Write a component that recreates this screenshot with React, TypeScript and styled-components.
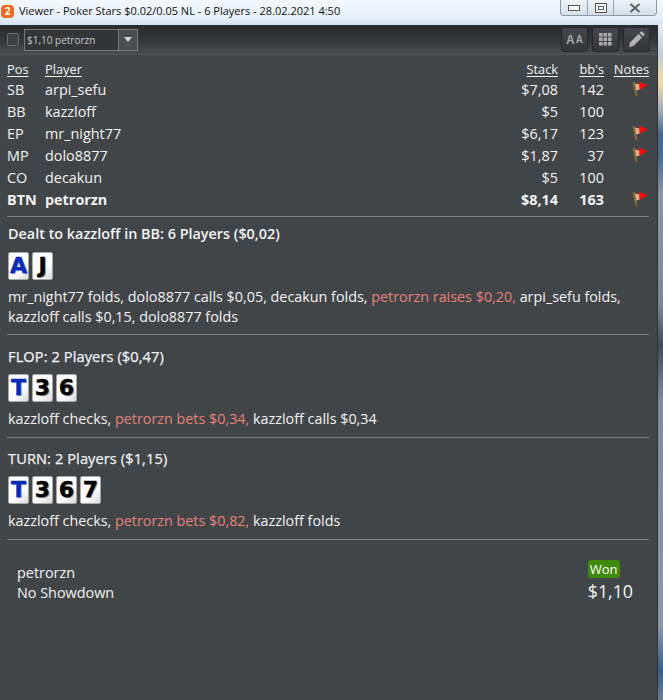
import React from 'react'
import styled, { createGlobalStyle } from 'styled-components'

const GlobalStyle = createGlobalStyle`
  html, body {
    margin: 0;
    padding: 0;
    background: #424548;
  }
  body {
    font-family: 'Open Sans', 'Noto Sans', sans-serif;
    overflow: hidden;
  }
`

interface Seat {
  pos: string
  name: string
  stack: string
  bbs: string
  flag?: boolean
  hero?: boolean
}

const seats: Seat[] = [
  { pos: 'SB', name: 'arpi_sefu', stack: '$7,08', bbs: '142', flag: true },
  { pos: 'BB', name: 'kazzloff', stack: '$5', bbs: '100' },
  { pos: 'EP', name: 'mr_night77', stack: '$6,17', bbs: '123', flag: true },
  { pos: 'MP', name: 'dolo8877', stack: '$1,87', bbs: '37', flag: true },
  { pos: 'CO', name: 'decakun', stack: '$5', bbs: '100' },
  { pos: 'BTN', name: 'petrorzn', stack: '$8,14', bbs: '163', flag: true, hero: true },
]

const Flag = () => (
  <svg width="16" height="16" viewBox="0 0 16 16">
    <path d="M1.5 1 L4.5 15" stroke="#8a6a34" strokeWidth="2" fill="none" />
    <path d="M3 2.5 L8 3.5 L8 8.5 L4 9.5 Z" fill="#d4b48c" />
    <path d="M7 1 L16 4 L7.5 9 Z" fill="#f40c0c" />
  </svg>
)

const App: React.FC = () => {
  return (
    <Window>
      <GlobalStyle />
      <TitleBar>
        <AppBadge>2</AppBadge>
        <TitleText>Viewer - Poker Stars $0.02/0.05 NL - 6 Players - 28.02.2021 4:50</TitleText>
        <WindowButtons>
          <WindowButton $w={26}>
            <svg width="12" height="6" viewBox="0 0 12 6"><rect x="0.5" y="0.5" width="11" height="5" fill="#fff" stroke="#555" /></svg>
          </WindowButton>
          <WindowButton $w={25}>
            <svg width="12" height="10" viewBox="0 0 12 10"><rect x="0.5" y="0.5" width="11" height="9" fill="#fff" stroke="#555" /><rect x="3.5" y="3.5" width="5" height="3" fill="none" stroke="#555" /></svg>
          </WindowButton>
          <WindowButton $w={42}>
            <svg width="12" height="10" viewBox="0 0 12 10"><path d="M1.5 1 L10.5 9 M10.5 1 L1.5 9" stroke="#666" strokeWidth="2.2" /></svg>
          </WindowButton>
        </WindowButtons>
      </TitleBar>
      <Main>
        <Pane>
          <Toolbar>
            <CheckBox />
            <Select>
              <SelectValue>$1,10 petrorzn</SelectValue>
              <SelectArrow><ArrowShape /></SelectArrow>
            </Select>
            <ToolButtons>
              <ToolButton>
                <FontGlyph>A</FontGlyph><FontGlyph $small>A</FontGlyph>
              </ToolButton>
              <ToolButton>
                <svg width="13" height="13" viewBox="0 0 13 13" fill="#a8a8a8">
                  {[0, 4.5, 9].map((y) => [0, 4.5, 9].map((x) => <rect key={`${x}-${y}`} x={x} y={y} width="3.6" height="3.6" />))}
                </svg>
              </ToolButton>
              <ToolButton>
                <svg width="17" height="17" viewBox="0 0 17 17" fill="#b4b4b4">
                  <path d="M1 16 L2 11.5 L10.5 3 L14 6.5 L5.5 15 Z" />
                  <path d="M11.5 2 L13 0.6 Q13.6 0.2 14.2 0.6 L16.4 2.8 Q16.8 3.4 16.4 4 L15 5.5 Z" />
                </svg>
              </ToolButton>
            </ToolButtons>
          </Toolbar>
          <Content>
            <SeatGrid>
              <HeadCell>Pos</HeadCell>
              <HeadCell>Player</HeadCell>
              <HeadCell $right>Stack</HeadCell>
              <HeadCell $right>bb's</HeadCell>
              <HeadCell $right>Notes</HeadCell>
              {seats.map((s) => (
                <React.Fragment key={s.pos}>
                  <SeatCell $hero={s.hero}>{s.pos}</SeatCell>
                  <SeatCell $hero={s.hero}>{s.name}</SeatCell>
                  <SeatCell $hero={s.hero} $right>{s.stack}</SeatCell>
                  <SeatCell $hero={s.hero} $right>{s.bbs}</SeatCell>
                  <NoteCell>{s.flag && <Flag />}</NoteCell>
                </React.Fragment>
              ))}
            </SeatGrid>

            <Street $top={7} $bottom={7}>
              <StreetTitle $bold>Dealt to kazzloff in BB: 6 Players ($0,02)</StreetTitle>
              <Cards>
                <Card $blue>A</Card>
                <Card>J</Card>
              </Cards>
              <Actions>
                mr_night77 folds, dolo8877 calls $0,05, decakun folds, <Raise>petrorzn raises $0,20,</Raise> arpi_sefu folds,
                <br />
                kazzloff calls $0,15, dolo8877 folds
              </Actions>
            </Street>

            <Street $top={11} $bottom={8}>
              <StreetTitle>FLOP: 2 Players ($0,47)</StreetTitle>
              <Cards>
                <Card $blue>T</Card>
                <Card>3</Card>
                <Card>6</Card>
              </Cards>
              <Actions>
                kazzloff checks, <Raise>petrorzn bets $0,34,</Raise> kazzloff calls $0,34
              </Actions>
            </Street>

            <Street $top={10} $bottom={8}>
              <StreetTitle>TURN: 2 Players ($1,15)</StreetTitle>
              <Cards>
                <Card $blue>T</Card>
                <Card>3</Card>
                <Card>6</Card>
                <Card>7</Card>
              </Cards>
              <Actions>
                kazzloff checks, <Raise>petrorzn bets $0,82,</Raise> kazzloff folds
              </Actions>
            </Street>

            <Result>
              <ResultNames>
                <div>petrorzn</div>
                <div>No Showdown</div>
              </ResultNames>
              <ResultAmount>
                <WonBadge>Won</WonBadge>
                <Amount>$1,10</Amount>
              </ResultAmount>
            </Result>
          </Content>
        </Pane>
        <Edge />
      </Main>
    </Window>
  )
}

const Window = styled.div`
  width: 663px;
  height: 700px;
  display: flex;
  flex-direction: column;
  overflow: hidden;
  background: #424548;
`

const TitleBar = styled.div`
  height: 25px;
  flex: none;
  box-sizing: border-box;
  display: flex;
  align-items: flex-start;
  padding-left: 1px;
  background: linear-gradient(#f3f9fd 0%, #e6f0f9 70%, #d3e0ee 100%);
`

const AppBadge = styled.div`
  width: 13px;
  height: 13px;
  margin-top: 5px;
  border-radius: 4px;
  background: #ee6a22;
  color: #fff;
  font-size: 10px;
  font-weight: 700;
  line-height: 13px;
  text-align: center;
`

const TitleText = styled.div`
  margin-left: 5px;
  margin-top: 3px;
  font-size: 11px;
  line-height: 16px;
  color: #111;
  white-space: nowrap;
`

const WindowButtons = styled.div`
  margin-left: auto;
  margin-right: 6px;
  display: flex;
  height: 15px;
  border: 1px solid #8a97a6;
  border-top: none;
  border-radius: 0 0 4px 4px;
  background: linear-gradient(#eef3f8, #d5dfe9);
`

const WindowButton = styled.div<{ $w: number }>`
  width: ${(p) => p.$w}px;
  display: flex;
  align-items: center;
  justify-content: center;
  border-left: 1px solid #9aa6b4;
  &:first-child {
    border-left: none;
  }
`

const Main = styled.div`
  flex: 1;
  display: flex;
  min-height: 0;
`

const Pane = styled.div`
  width: 657px;
  flex: none;
`

const Edge = styled.div`
  flex: 1;
  background: linear-gradient(
    #e4ecf4 0px,
    #c3ccd6 30px,
    #e8d8b0 50px,
    #e8d8b0 60px,
    #a4acb4 85px,
    #46668e 110px,
    #4a6a92 130px,
    #8a96a4 170px,
    #7a8794 280px,
    #3f4a57 320px,
    #7c8a9a 375px,
    #8a98a8 600px,
    #3b5c8c 645px,
    #6a7c92 675px
  );
  border-left: 1px solid #2c2e30;
`

const Toolbar = styled.div`
  height: 30px;
  box-sizing: border-box;
  display: flex;
  align-items: center;
  padding: 0 7px;
  background: linear-gradient(#2a2b2d 0%, #343537 50%, #4b4c4e 100%);
  border-bottom: 1px solid #55585b;
`

const CheckBox = styled.div`
  width: 10px;
  height: 11px;
  border: 1px solid #6a6c6e;
  border-radius: 2px;
  background: #3e4042;
`

const Select = styled.div`
  margin-left: 5px;
  width: 114px;
  height: 22px;
  box-sizing: border-box;
  display: flex;
  border: 1px solid #77797b;
  background: #333537;
`

const SelectValue = styled.div`
  flex: 1;
  padding-left: 2px;
  font-size: 10px;
  line-height: 20px;
  color: #c6c8ca;
`

const SelectArrow = styled.div`
  width: 18px;
  display: flex;
  align-items: center;
  justify-content: center;
  border-left: 1px solid #77797b;
  background: #4c4e50;
`

const ArrowShape = styled.div`
  border-left: 4.5px solid transparent;
  border-right: 4.5px solid transparent;
  border-top: 5px solid #d4d4d4;
`

const ToolButtons = styled.div`
  margin-left: auto;
  display: flex;
  gap: 4px;
`

const ToolButton = styled.div`
  width: 27px;
  height: 25px;
  box-sizing: border-box;
  display: flex;
  align-items: center;
  justify-content: center;
  gap: 1px;
  border: 1px solid #26272a;
  border-radius: 3px;
  background: linear-gradient(#45474a, #343638);
`

const FontGlyph = styled.span<{ $small?: boolean }>`
  font-family: 'Liberation Sans', sans-serif;
  font-weight: 700;
  font-size: ${(p) => (p.$small ? 10 : 12)}px;
  color: #a8a8a8;
`

const Content = styled.div`
  padding: 6px 0 0 7px;
  color: #f1f2f3;
`

const SeatGrid = styled.div`
  display: grid;
  width: 642px;
  grid-template-columns: 38px 1fr 80px 46px 45px;
  grid-template-rows: 18px;
  grid-auto-rows: 22px;
  padding-bottom: 5px;
  border-bottom: 1px solid #7d7f81;
`

const HeadCell = styled.div<{ $right?: boolean }>`
  font-size: 12.8px;
  line-height: 16px;
  text-align: ${(p) => (p.$right ? 'right' : 'left')};
  text-decoration: underline;
  text-underline-offset: 2px;
`

const SeatCell = styled.div<{ $right?: boolean; $hero?: boolean }>`
  font-size: 14.4px;
  line-height: 22px;
  font-weight: ${(p) => (p.$hero ? 700 : 400)};
  text-align: ${(p) => (p.$right ? 'right' : 'left')};
`

const NoteCell = styled.div`
  display: flex;
  justify-content: flex-end;
  padding: 2px 1px 0 0;
`

const Street = styled.div<{ $top: number; $bottom: number }>`
  width: 642px;
  padding: ${(p) => p.$top}px 0 ${(p) => p.$bottom}px;
  border-bottom: 1px solid #7d7f81;
`

const StreetTitle = styled.div<{ $bold?: boolean }>`
  margin-left: 1px;
  line-height: 20px;
  font-size: ${(p) => (p.$bold ? 14.4 : 14.6)}px;
  font-weight: ${(p) => (p.$bold ? 600 : 400)};
  letter-spacing: ${(p) => (p.$bold ? 0 : 0.1)}px;
  -webkit-text-stroke: ${(p) => (p.$bold ? 0 : 0.25)}px currentColor;
`

const Cards = styled.div`
  display: flex;
  gap: 3px;
  margin: 8px 0 7px 1px;
`

const Card = styled.div<{ $blue?: boolean }>`
  width: 21px;
  height: 28px;
  border-radius: 2px;
  background: linear-gradient(135deg, #ffffff 60%, #d9d9d9 100%);
  border: 1px solid #a8a8a8;
  box-sizing: border-box;
  font-family: 'DejaVu Sans', sans-serif;
  font-weight: 700;
  font-size: 22px;
  line-height: 26px;
  text-align: center;
  color: ${(p) => (p.$blue ? '#0a2bb5' : '#000')};
  -webkit-text-stroke: 0.4px ${(p) => (p.$blue ? '#0a2bb5' : '#000')};
  text-shadow: 1px 1px 1px ${(p) => (p.$blue ? 'rgba(10,43,181,.5)' : 'rgba(0,0,0,.5)')};
`

const Actions = styled.div`
  margin-left: 1px;
  font-size: 14.35px;
  line-height: 20px;
  white-space: nowrap;
`

const Raise = styled.span`
  color: #e4827a;
`

const Result = styled.div`
  width: 616px;
  display: flex;
  justify-content: space-between;
  align-items: flex-start;
  padding: 20px 0 0 10px;
`

const ResultNames = styled.div`
  font-size: 14.4px;
  line-height: 20px;
  padding-top: 3px;
`

const ResultAmount = styled.div`
  display: flex;
  flex-direction: column;
  align-items: flex-start;
`

const WonBadge = styled.div`
  padding: 0 2px;
  height: 18px;
  border-radius: 3px;
  background: #3f8a0c;
  color: #fff;
  font-size: 13px;
  line-height: 18px;
`

const Amount = styled.div`
  font-size: 17.8px;
  line-height: 27px;
`

export default App
